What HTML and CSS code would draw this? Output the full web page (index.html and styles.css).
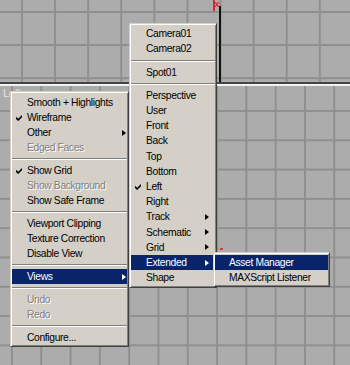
FILE: index.html
```html
<!DOCTYPE html>
<html>
<head>
<meta charset="utf-8">
<link rel="stylesheet" href="styles.css">
</head>
<body>
<div class="screen">
  <div class="vp vp-top">
    <span class="axis-black"></span>
    <span class="axis-red"></span>
    <span class="axis-label">x</span>
  </div>
  <div class="vp vp-bottom">
    <span class="vp-label">Left</span>
    <span class="axis-mark"></span>
  </div>

  <div class="menu menu-main">
    <div class="item"><span class="label">Smooth + Highlights</span></div>
    <div class="item"><svg class="check" viewBox="0 0 7 7"><polygon points="0,2 2.5,4.5 7,0 7,2.6 2.5,7.1 0,4.6"/></svg><span class="label">Wireframe</span></div>
    <div class="item"><span class="label">Other</span><span class="arrow"></span></div>
    <div class="item disabled"><span class="label">Edged Faces</span></div>
    <div class="sep"></div>
    <div class="item"><svg class="check" viewBox="0 0 7 7"><polygon points="0,2 2.5,4.5 7,0 7,2.6 2.5,7.1 0,4.6"/></svg><span class="label">Show Grid</span></div>
    <div class="item disabled"><span class="label">Show Background</span></div>
    <div class="item"><span class="label">Show Safe Frame</span></div>
    <div class="sep"></div>
    <div class="item"><span class="label">Viewport Clipping</span></div>
    <div class="item"><span class="label">Texture Correction</span></div>
    <div class="item"><span class="label">Disable View</span></div>
    <div class="sep"></div>
    <div class="item active"><span class="label">Views</span><span class="arrow"></span></div>
    <div class="sep"></div>
    <div class="item disabled"><span class="label">Undo</span></div>
    <div class="item disabled"><span class="label">Redo</span></div>
    <div class="sep"></div>
    <div class="item"><span class="label">Configure...</span></div>
  </div>

  <div class="menu menu-views">
    <div class="item"><span class="label">Camera01</span></div>
    <div class="item"><span class="label">Camera02</span></div>
    <div class="sep"></div>
    <div class="item"><span class="label">Spot01</span></div>
    <div class="sep"></div>
    <div class="item"><span class="label">Perspective</span></div>
    <div class="item"><span class="label">User</span></div>
    <div class="item"><span class="label">Front</span></div>
    <div class="item"><span class="label">Back</span></div>
    <div class="item"><span class="label">Top</span></div>
    <div class="item"><span class="label">Bottom</span></div>
    <div class="item"><svg class="check" viewBox="0 0 7 7"><polygon points="0,2 2.5,4.5 7,0 7,2.6 2.5,7.1 0,4.6"/></svg><span class="label">Left</span></div>
    <div class="item"><span class="label">Right</span></div>
    <div class="item"><span class="label">Track</span><span class="arrow"></span></div>
    <div class="item"><span class="label">Schematic</span><span class="arrow"></span></div>
    <div class="item"><span class="label">Grid</span><span class="arrow"></span></div>
    <div class="item active"><span class="label">Extended</span><span class="arrow"></span></div>
    <div class="item"><span class="label">Shape</span></div>
  </div>

  <div class="menu menu-ext">
    <div class="item active"><span class="label">Asset Manager</span></div>
    <div class="item"><span class="label">MAXScript Listener</span></div>
  </div>
</div>
</body>
</html>
```

FILE: styles.css
```css
* { box-sizing: border-box; }
html, body { margin: 0; padding: 0; }
body {
  width: 350px;
  height: 365px;
  overflow: hidden;
  background: #acacac;
  font-family: "Liberation Sans", Arial, sans-serif;
}
.screen {
  position: relative;
  width: 350px;
  height: 365px;
  display: flex;
  flex-direction: column;
  overflow: hidden;
}
.vp {
  position: relative;
  background-color: #acacac;
}
.vp-top {
  height: 84px;
  flex: none;
  border-bottom: 2px solid #454545;
  background-image:
    linear-gradient(to right, #8f8f8f 0 2px, transparent 2px),
    linear-gradient(to bottom, #8f8f8f 0 2px, transparent 2px);
  background-size: 33.1px 33.1px;
  background-position: 21px 11px;
}
.vp-bottom {
  flex: 1;
  border-top: 2px solid #f2f2f2;
  padding: 2px 3px;
  background-image:
    linear-gradient(to right, #8f8f8f 0 2px, transparent 2px),
    linear-gradient(to bottom, #8f8f8f 0 2px, transparent 2px);
  background-size: 29.3px 29.3px;
  background-position: 11px 24px;
}
.vp-label {
  display: block;
  font-size: 11px;
  line-height: 11px;
  color: #e6e6e6;
}
.axis-black {
  position: absolute;
  left: 219px;
  top: 6px;
  bottom: 0;
  width: 1.5px;
  background: #111;
}
.axis-red {
  position: absolute;
  left: 213px;
  top: 0;
  width: 1.5px;
  height: 11px;
  background: #d42a2a;
}
.axis-label {
  position: absolute;
  left: 214.5px;
  top: 0;
  font-size: 9px;
  line-height: 9px;
  font-weight: bold;
  color: #d42a2a;
}
.axis-mark {
  position: absolute;
  left: 220px;
  top: 162px;
  width: 3px;
  height: 2px;
  background: #c84040;
}

.menu {
  position: absolute;
  background: #d4d0c8;
  border: 1px solid;
  border-color: #d4d0c8 #404040 #404040 #d4d0c8;
  box-shadow: inset 1px 1px 0 #fff, inset -1px -1px 0 #808080;
  padding: 0 1px;
  font-size: 10.3px;
  letter-spacing: -0.35px;
  color: #000;
}
.menu-main {
  left: 10px;
  top: 91px;
  width: 119px;
  padding-top: 3px;
  padding-bottom: 1px;
  --row: 15px;
  --first: 15px;
  --last: 5px;
}
.menu-views {
  left: 129px;
  top: 23px;
  width: 88px;
  padding-top: 2.3px;
  padding-bottom: 2px;
  --row: 15.2px;
  --first: 15px;
  --last: 10px;
}
.menu-ext {
  left: 213px;
  top: 252px;
  width: 117px;
  padding-top: 2px;
  padding-bottom: 1px;
  --row: 15px;
  --first: 14px;
  --last: 4px;
}
.item {
  display: grid;
  grid-template-columns: var(--first) 1fr var(--last);
  align-items: center;
  height: var(--row);
  line-height: var(--row);
  white-space: nowrap;
}
.label { grid-column: 2; }
.check {
  grid-column: 1;
  width: 6px;
  height: 6px;
  margin-left: 4px;
  fill: #000;
}
.arrow {
  grid-column: 3;
  width: 0;
  height: 0;
  border-left: 4px solid #000;
  border-top: 3px solid transparent;
  border-bottom: 3px solid transparent;
}
.item.disabled {
  color: #808080;
  text-shadow: 1px 1px 0 #fff;
}
.item.active {
  background: #0a246a;
  color: #fff;
}
.item.active .arrow { border-left-color: #fff; }
.sep {
  height: 2px;
  margin: 3px 0;
  border-top: 1px solid #808080;
  border-bottom: 1px solid #fff;
}
```
